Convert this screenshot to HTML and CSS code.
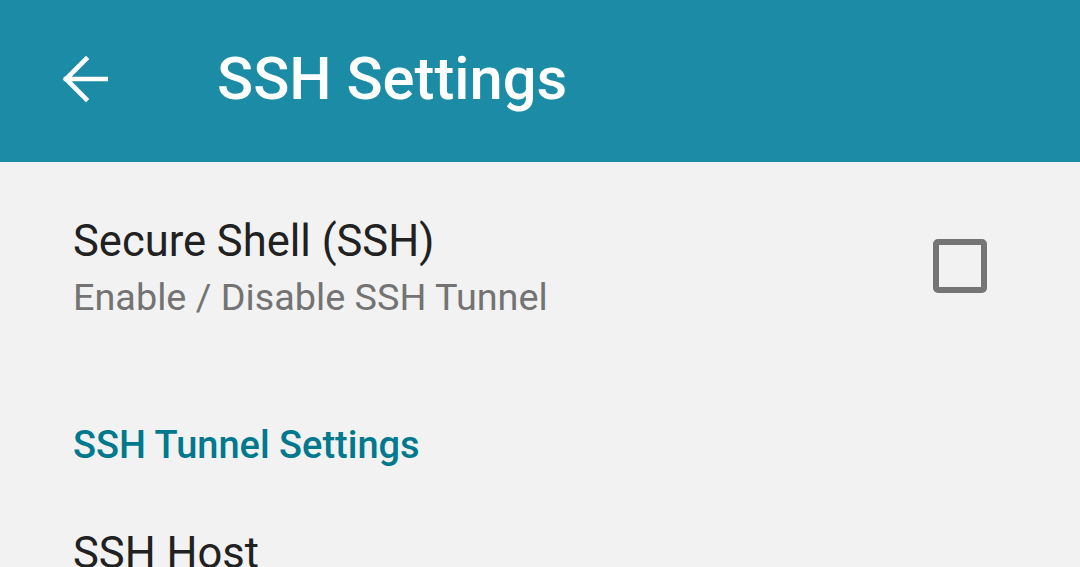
FILE: index.html
```html
<!DOCTYPE html>
<html>
<head>
<meta charset="utf-8">
<link rel="stylesheet" href="styles.css">
</head>
<body>
<header class="appbar">
  <div class="nav">
    <svg class="back" viewBox="0 0 48 48" width="48" height="48">
      <path d="M46 24H6M26 4L6 24l20 20" fill="none" stroke="#fff" stroke-width="4.6" stroke-linecap="square"/>
    </svg>
  </div>
  <h1 class="title">SSH Settings</h1>
</header>
<main class="list">
  <div class="pref">
    <div class="pref-text">
      <div class="pref-title">Secure Shell (SSH)</div>
      <div class="pref-summary">Enable / Disable SSH Tunnel</div>
    </div>
    <div class="checkbox"></div>
  </div>
  <div class="category">SSH Tunnel Settings</div>
  <div class="pref single">
    <div class="pref-text">
      <div class="pref-title">SSH Host</div>
    </div>
  </div>
</main>
</body>
</html>
```
FILE: styles.css
```css
html, body {
  margin: 0;
  padding: 0;
  height: 100%;
  overflow: hidden;
  background: #f2f2f2;
  font-family: Roboto, "Noto Sans", sans-serif;
}
.appbar {
  height: 162px;
  background: #1c8ca6;
  display: flex;
  align-items: center;
  box-sizing: border-box;
  padding-bottom: 4px;
}
.nav {
  width: 217px;
  padding-left: 60px;
  box-sizing: border-box;
  display: flex;
  align-items: center;
}
.back { display: block; }
.title {
  margin: 0;
  color: #fff;
  font-size: 59.7px;
  font-weight: 500;
  letter-spacing: 0;
}
.list {
  padding: 0 73px;
}
.pref {
  display: flex;
  align-items: center;
  padding-top: 52px;
  padding-bottom: 50px;
}
.pref-text { flex: 1; }
.pref-title {
  color: #212121;
  font-size: 43.5px;
  line-height: 56px;
}
.pref-summary {
  color: #737373;
  font-size: 37.8px;
  line-height: 54px;
}
.checkbox {
  width: 42px;
  height: 42px;
  border: 6px solid #757575;
  border-radius: 5px;
  margin-right: 20px;
  margin-bottom: 6px;
}
.category {
  color: #00798f;
  font-size: 38px;
  font-weight: 500;
  padding-top: 44px;
  line-height: 54px;
}
.pref.single { padding-top: 54px; }
```
